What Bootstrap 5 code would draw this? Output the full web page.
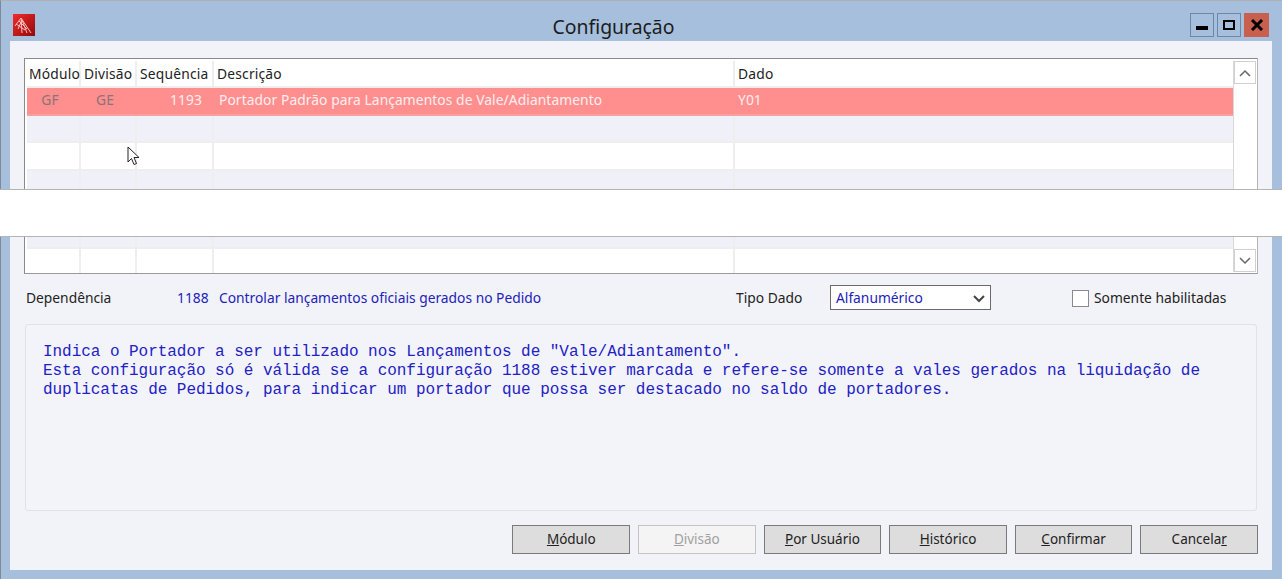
<!DOCTYPE html>
<html lang="pt">
<head>
<meta charset="utf-8">
<title>Configuração</title>
<link href="https://cdn.jsdelivr.net/npm/bootstrap@5.3.0/dist/css/bootstrap.min.css" rel="stylesheet">
<style>
html,body{height:579px;overflow:hidden}
body{background:#a6bfdc;font-family:"Noto Sans","Open Sans",sans-serif;font-size:13.8px;color:#222;position:relative}
.win-shell{height:579px;border-top:1px solid #b0b0b0;border-left:1px solid #7f8a98;padding:0 9px 9px 9px;display:flex;flex-direction:column}
.title-strip{height:40px;position:relative;flex:none}
.app-logo{width:22px;height:22px;margin-top:13px;margin-left:3px;display:block}
.title-text{position:absolute;left:0;right:0;top:12px;padding-right:56px;text-align:center;font-size:19.4px;line-height:28px;color:#1c1c1c}
.win-btns{position:absolute;right:4px;top:12px;gap:3px}
.win-btn{width:24px;height:24px;border:1px solid #6d87a5;display:flex;align-items:center;justify-content:center;background:#a6bfdc}
.win-btn.closer{background:#c9604f;border-color:#c9604f;width:25px}
.client{flex:1;background:#f2f3f9;padding:17px 14px 0 14px;width:1262px}
.grid-box{height:216px;width:1234px;border:1px solid #8a8a8a;border-right-color:#b5b5b5;border-bottom-color:#9a9a9a;padding:2px 1px 0 2px;background:#fff;display:flex;overflow:hidden}
.grid-tbl{width:1206px;table-layout:fixed;margin:0;border-collapse:collapse;align-self:flex-start;--bs-table-bg:transparent}
.grid-tbl th,.grid-tbl td{padding:0 3px;height:27.5px;border:0;border-right:2px solid #eee;border-bottom:2px solid #eee;font-weight:400;white-space:nowrap;line-height:24px;box-shadow:none}
.grid-tbl th{color:#222;padding:0 3px;height:26px;letter-spacing:.2px}
.grid-tbl th:first-child{padding-left:2px}
.grid-tbl tr:nth-child(even) td{background:#f0f1f8}
.grid-tbl tr.picked td{background:#ff8f8f;color:#ffeeee;border-right-color:#ff8f8f;border-bottom-color:#f7a0a0;letter-spacing:.08px}
.grid-tbl tr.picked td.muted-cell{color:#8d7377;text-align:center;padding-right:9px}
.grid-tbl tr.picked td.seq-cell{text-align:right;padding-right:10px}
.grid-tbl tr.picked td.desc-cell{padding-left:5px}
.grid-tbl tr.tight-a td{height:25px}
.grid-tbl tr.tight-b td{height:26px}
.grid-tbl td:last-child,.grid-tbl th:last-child{border-right:0}
.scroll-rail{width:23px;border-left:1px solid #d8d8d8;display:flex;flex-direction:column;justify-content:space-between;margin-bottom:1px}
.scroll-cap{height:23px;border:1px solid #d0d0d0;display:flex;align-items:center;justify-content:center;background:#fff}
.info-row{height:50px;width:1234px;color:#222;padding-bottom:1px}
.dep-label{width:153px;padding-left:2px}
.dep-code{width:28px;text-align:right;color:#2222b8;margin-right:14px}
.dep-text{color:#2222b8;width:517px}
.tipo-label{width:94px}
.tipo-select{width:161px;height:25px;margin-bottom:2px;border:1px solid #6a6a6a;background:#fff;color:#2222b8;padding:2px 5px 0}
.only-check{margin-left:81px;gap:5px;white-space:nowrap;margin-bottom:1px}
.only-check .form-check-input{width:17px;height:17px;margin:0;border-radius:0;border:1px solid #8a8a8a;background-color:#fff}
.note-box{width:1232px;height:187px;margin-left:1px;border:1px solid #dde3ea;border-radius:3px;background:#f3f3fa;padding:18px 17px;font-family:"Liberation Mono",monospace;font-size:16px;letter-spacing:-.04px;line-height:19px;color:#2222c4;white-space:pre}
.btn-line{margin-top:14px;width:1234px;gap:8px}
.win-action{width:117.6px;height:29px;padding:0;border-radius:0;border:1px solid #7a7a7a;background:#dddddd;color:#222;font-size:13.5px;line-height:27px;--bs-btn-hover-bg:#ddd}
.win-action:disabled{background:#f4f4f4;border-color:#c4c4c4;color:#a0a0a0;opacity:1}
.cut-band{position:absolute;left:0;right:0;top:189px;height:48px;background:#fff;border-top:1px solid #b4b4b4;border-bottom:1px solid #b4b4b4}
.ptr{position:absolute;left:127px;top:146px}
</style>
</head>
<body>
<div class="win-shell">
  <div class="title-strip">
    <svg class="app-logo" viewBox="0 0 22 22"><defs><linearGradient id="lg" x1="0" y1="0" x2="1" y2="1"><stop offset="0" stop-color="#f52a2a"/><stop offset="1" stop-color="#8e0b0b"/></linearGradient></defs><rect width="22" height="22" fill="url(#lg)"/><path d="M2 12 8 4l10 15M5 15 9 6l5 13M8 4l1 15M3 10l9 6M6 7l8 8" fill="none" stroke="#ffc0c0" stroke-width="1"/></svg>
    <div class="title-text">Configuração</div>
    <div class="win-btns d-flex">
      <div class="win-btn"><svg width="12" height="12" viewBox="0 0 12 12"><rect x="0" y="7" width="12" height="4" fill="#000"/></svg></div>
      <div class="win-btn"><svg width="12" height="12" viewBox="0 0 12 12"><rect x="1" y="2" width="10" height="8" fill="none" stroke="#000" stroke-width="2"/></svg></div>
      <div class="win-btn closer"><svg width="14" height="12" viewBox="0 0 14 12"><path d="M2 1l10 10M12 1 2 11" stroke="#000" stroke-width="3" fill="none"/></svg></div>
    </div>
  </div>
  <div class="client">
    <div class="grid-box">
      <table class="table grid-tbl">
        <colgroup><col style="width:53px"><col style="width:56px"><col style="width:77px"><col style="width:521px"><col></colgroup>
        <thead><tr><th>Módulo</th><th>Divisão</th><th>Sequência</th><th>Descrição</th><th>Dado</th></tr></thead>
        <tbody>
          <tr class="picked"><td class="muted-cell">GF</td><td class="muted-cell">GE</td><td class="seq-cell">1193</td><td class="desc-cell">Portador Padrão para Lançamentos de Vale/Adiantamento</td><td>Y01</td></tr>
          <tr><td></td><td></td><td></td><td></td><td></td></tr>
          <tr><td></td><td></td><td></td><td></td><td></td></tr>
          <tr><td></td><td></td><td></td><td></td><td></td></tr>
          <tr class="tight-a"><td></td><td></td><td></td><td></td><td></td></tr>
          <tr class="tight-b"><td></td><td></td><td></td><td></td><td></td></tr>
          <tr class="tight-b"><td></td><td></td><td></td><td></td><td></td></tr>
        </tbody>
      </table>
      <div class="scroll-rail">
        <div class="scroll-cap"><svg width="12" height="8" viewBox="0 0 12 8"><path d="M1 7l5-5 5 5" fill="none" stroke="#666" stroke-width="1.5"/></svg></div>
        <div class="scroll-cap"><svg width="12" height="8" viewBox="0 0 12 8"><path d="M1 1l5 5 5-5" fill="none" stroke="#666" stroke-width="1.5"/></svg></div>
      </div>
    </div>
    <div class="info-row d-flex align-items-center">
      <div class="dep-label">Dependência</div>
      <div class="dep-code">1188</div>
      <div class="dep-text">Controlar lançamentos oficiais gerados no Pedido</div>
      <div class="tipo-label">Tipo Dado</div>
      <div class="tipo-select d-flex align-items-center justify-content-between"><span>Alfanumérico</span><svg width="12" height="8" viewBox="0 0 12 8"><path d="M1 1l5 5 5-5" fill="none" stroke="#444" stroke-width="2"/></svg></div>
      <label class="only-check d-flex align-items-center"><input class="form-check-input" type="checkbox"><span>Somente habilitadas</span></label>
    </div>
    <div class="note-box">Indica o Portador a ser utilizado nos Lançamentos de "Vale/Adiantamento".
Esta configuração só é válida se a configuração 1188 estiver marcada e refere-se somente a vales gerados na liquidação de
duplicatas de Pedidos, para indicar um portador que possa ser destacado no saldo de portadores.</div>
    <div class="btn-line d-flex justify-content-end">
      <button class="btn win-action"><u>M</u>ódulo</button>
      <button class="btn win-action" disabled><u>D</u>ivisão</button>
      <button class="btn win-action"><u>P</u>or Usuário</button>
      <button class="btn win-action"><u>H</u>istórico</button>
      <button class="btn win-action"><u>C</u>onfirmar</button>
      <button class="btn win-action">Cancela<u>r</u></button>
    </div>
  </div>
</div>
<div class="cut-band"></div>
<svg class="ptr" width="14" height="20" viewBox="0 0 14 20"><path d="M1 1v15l3.5-3.5 2.5 6 2.5-1-2.5-6H12z" fill="#fff" stroke="#222" stroke-width="1"/></svg>
<script src="https://cdn.jsdelivr.net/npm/bootstrap@5.3.0/dist/js/bootstrap.bundle.min.js"></script>
</body>
</html>
